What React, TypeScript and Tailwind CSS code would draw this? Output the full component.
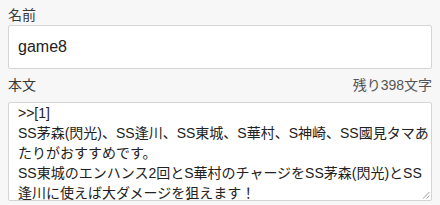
const body = [
  ">>[1]",
  "SS茅森(閃光)、SS逢川、SS東城、S華村、S神崎、SS國見タマあ",
  "たりがおすすめです。",
  "SS東城のエンハンス2回とS華村のチャージをSS茅森(閃光)とSS",
  "逢川に使えば大ダメージを狙えます！",
].join("\n");

const font = { fontFamily: '"Liberation Sans", "Noto Sans CJK JP", sans-serif' };

export default function App() {
  return (
    <div className="w-[440px] h-[205px] bg-[#f7f7f7] px-2 overflow-hidden" style={font}>
      <div className="pt-[5px] h-[25px] leading-5 text-[14px] text-[#3a3a3a]">名前</div>
      <input
        type="text"
        defaultValue="game8"
        className="block w-full h-[44px] bg-white border border-[#d4d4d4] rounded-[2px] px-[9px] text-[16px] text-[#222] outline-none"
        style={font}
      />
      <div className="flex items-center justify-between mt-[6px] mb-[7px] h-5 leading-5 text-[14px]">
        <span className="text-[#3a3a3a]">本文</span>
        <span className="text-[#555]">残り398文字</span>
      </div>
      <div className="relative">
        <textarea
          readOnly
          wrap="off"
          value={body}
          className="block w-full h-[99px] bg-white border border-[#d4d4d4] rounded-[2px] pl-[9px] pr-1 pt-0 text-[14px] leading-5 text-[#222] whitespace-pre overflow-hidden resize-none outline-none"
          style={font}
        />
        {/* resize grip */}
        <svg className="absolute right-[2px] bottom-[2px] w-[8px] h-[8px]" viewBox="0 0 8 8" fill="none">
          <path d="M1 7.5L7.5 1M4.5 7.5L7.5 4.5" stroke="#9a9a9a" strokeWidth="1" />
        </svg>
      </div>
    </div>
  );
}
